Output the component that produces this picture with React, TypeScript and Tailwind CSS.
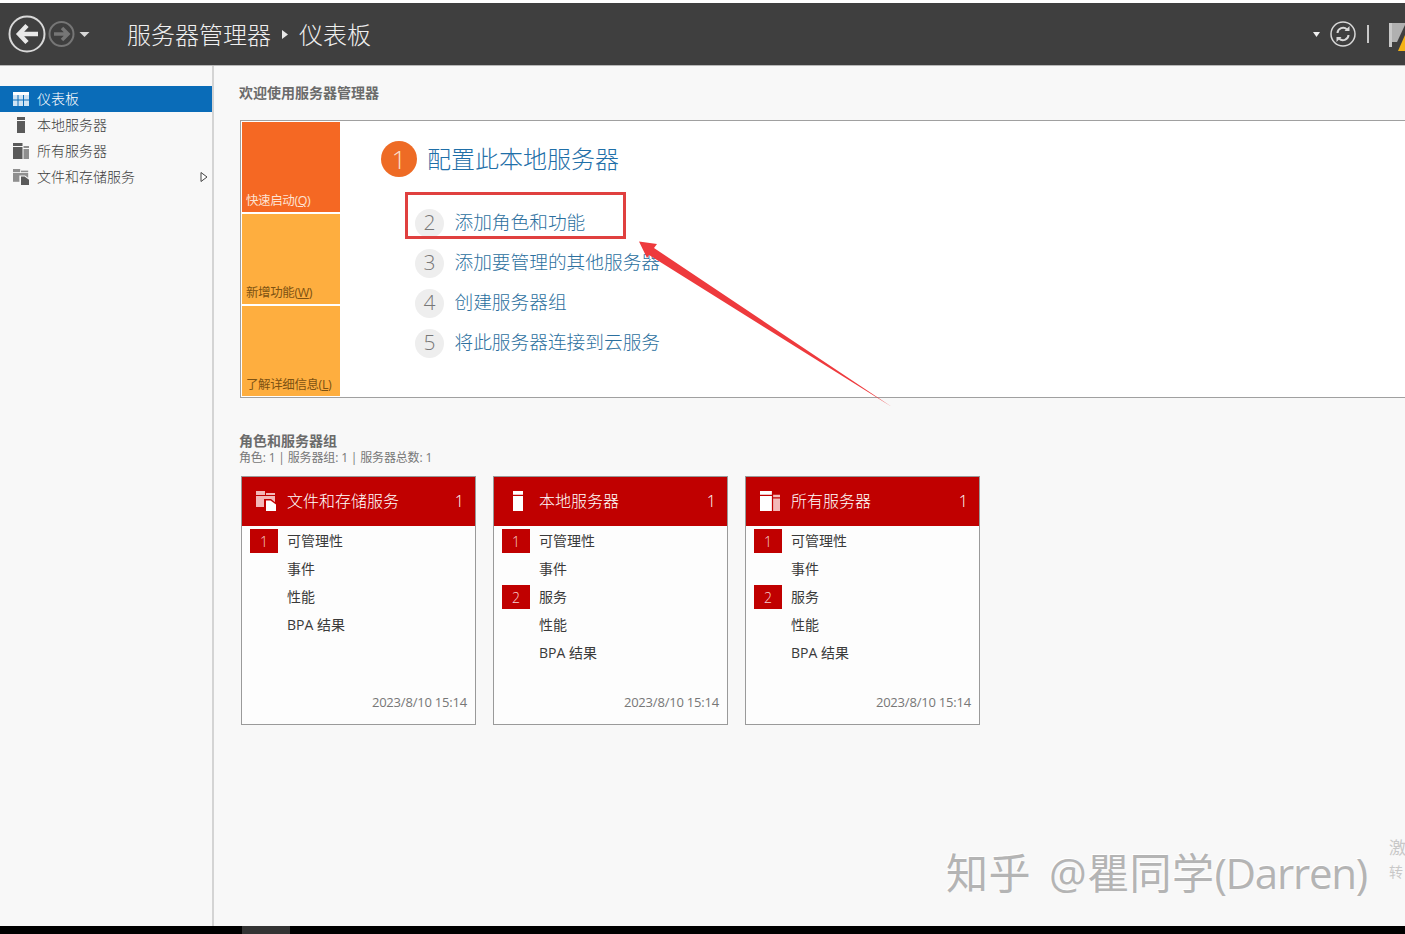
import React from "react";

const FONT = "font-['Open_Sans','Noto_Sans_CJK_SC',sans-serif]";

function GridIcon() {
  return (
    <svg width="16" height="14" viewBox="0 0 16 14">
      <rect x="0" y="0" width="16" height="14" fill="#cfe3f3" />
      <rect x="0" y="0" width="16" height="3" fill="#ffffff" />
      <path d="M0 8h16M5 3v11M10.500 3v11" stroke="#0a6cb8" strokeWidth="1" />
    </svg>
  );
}

function LocalIcon({ c = "#5a5a5a", w = 8, h = 16 }: { c?: string; w?: number; h?: number }) {
  return (
    <svg width={w} height={h} viewBox="0 0 9 16" preserveAspectRatio="none">
      <rect x="0" y="0" width="9" height="3" fill={c} />
      <rect x="0" y="4" width="9" height="12" fill={c} />
    </svg>
  );
}

function AllIcon({ c = "#5a5a5a", d = "#8f8f8f", s = 16 }: { c?: string; d?: string; s?: number }) {
  return (
    <svg width={s} height={s} viewBox="0 0 16 16">
      <rect x="0" y="0" width="9.500" height="3" fill={c} />
      <rect x="0" y="4" width="9.500" height="12" fill={c} />
      <rect x="10.500" y="3" width="5.500" height="2" fill={d} />
      <rect x="10.500" y="6" width="5.500" height="10" fill={d} />
    </svg>
  );
}

function FilesIcon({ c = "#8f8f8f", d = "#5a5a5a", cut = "#f8f8f8", s = 16 }: { c?: string; d?: string; cut?: string; s?: number }) {
  return (
    <svg width={s} height={s} viewBox="0 0 20 20">
      <rect x="0" y="0" width="9" height="4" fill={c} />
      <rect x="10" y="2" width="9" height="2" fill={c} />
      <rect x="0" y="5" width="19" height="11" fill={c} />
      <path d="M8 8h7l5 4v8H8z" fill={cut} />
      <path d="M10 9.500h4.500L20 13.500V20H10z" fill={d} />
    </svg>
  );
}

function Arrow() {
  return (
    <svg width="270" height="180" viewBox="0 0 270 180" className="absolute left-[630px] top-[232px]">
      <path d="M9 9.500 L27 12 L24 16 L262 175 L19 23 L17 26 Z" fill="#ee3a3d" />
    </svg>
  );
}

function NavItem({ icon, label, active, chevron }: { icon: React.ReactNode; label: string; active?: boolean; chevron?: boolean }) {
  return (
    <div className={active ? "flex h-[26px] items-center bg-[#0a6cb8] pb-[1px] text-white" : "flex h-[26px] items-center pb-[1px] text-[#3c3c3c]"}>
      <div className="flex w-[37px] shrink-0 items-center justify-center pl-[5px]">{icon}</div>
      <span className="text-[14px] font-light leading-none">{label}</span>
      {chevron && (
        <svg width="8" height="10" viewBox="0 0 8 10" className="ml-auto mr-[4px]">
          <path d="M1 .5 7 5 1 9.500z" fill="#fff" stroke="#444" />
        </svg>
      )}
    </div>
  );
}

function Tile({ label, accel, orange }: { label: string; accel: string; orange?: boolean }) {
  return (
    <div className={`flex h-[90px] w-[98px] items-end px-[4px] pb-[3px] text-[12.500px] leading-[16px] tracking-[-0.4px] ${orange ? "bg-[#f56823] text-[#fde3d3]" : "bg-[#feae3f] text-[#7d5212]"}`}>
      <span>
        {label}(<span className="underline">{accel}</span>)
      </span>
    </div>
  );
}

function Step({ n, label }: { n: string; label: string }) {
  return (
    <div className="flex h-[40px] items-center">
      <div className="mb-[2px] flex h-[29px] w-[29px] items-center justify-center rounded-full bg-[#eeeeee] text-[21px] font-light text-[#777777]">{n}</div>
      <span className="mb-[4px] ml-[10.500px] text-[18.700px] font-light text-[#2b6f9e]">{label}</span>
    </div>
  );
}

function Row({ label, badge }: { label: string; badge?: string }) {
  return (
    <div className="flex h-[28px] items-center">
      <div className="flex w-[45px] shrink-0 pl-[8px]">
        {badge && <div className="flex h-[24px] w-[28px] items-center justify-center bg-[#c00000] text-[14px] font-light text-[#f8d0d0]">{badge}</div>}
      </div>
      <span className="text-[14px] leading-none text-[#3a3a3a]">{label}</span>
    </div>
  );
}

function Card({ icon, title, rows }: { icon: React.ReactNode; title: string; rows: [string, string?][] }) {
  return (
    <div className="flex h-[249px] w-[235px] flex-col border border-[#9a9a9a] bg-[#fdfdfd]">
      <div className="flex h-[49px] shrink-0 items-center bg-[#c00000] pb-[1px] text-white">
        <div className="flex w-[45px] shrink-0 items-center justify-center pl-[2px]">{icon}</div>
        <span className="text-[16px] font-light leading-none">{title}</span>
        <span className="ml-auto mr-[11px] text-[16px] font-light">1</span>
      </div>
      <div className="flex flex-1 flex-col pt-[1px]">
        {rows.map(([l, b]) => (
          <Row key={l} label={l} badge={b} />
        ))}
      </div>
      <div className="pb-[13px] pr-[8px] text-right text-[13px] leading-[18px] tracking-[-0.2px] text-[#777777]">2023/8/10 15:14</div>
    </div>
  );
}

export default function App() {
  return (
    <div className={`${FONT} relative flex h-[934px] w-[1405px] flex-col overflow-hidden bg-[#f8f8f8]`}>
      <div className="h-[3px] shrink-0 bg-white" />
      <header className="flex h-[63px] shrink-0 items-center border-b border-[#b8b8b8] bg-[#3f3f3f] text-white">
        <svg width="92" height="40" viewBox="0 0 92 40" className="ml-[7px] shrink-0">
          <circle cx="20" cy="20" r="17.500" fill="none" stroke="#d8d8d8" strokeWidth="2" />
          <path d="M31 20H13M20 11.500l-8 8.500 8 8.500" fill="none" stroke="#e8e8e8" strokeWidth="4.500" />
          <circle cx="54.500" cy="20" r="12" fill="none" stroke="#767676" strokeWidth="2" />
          <path d="M47 20h13M55 14l6 6-6 6" fill="none" stroke="#767676" strokeWidth="3.500" />
          <path d="M72.500 18h10l-5 5z" fill="#d8d8d8" />
        </svg>
        <span className="ml-[28px] pt-[1px] text-[24px] font-light leading-none text-[#f0f0f0]">服务器管理器</span>
        <svg width="6" height="9" viewBox="0 0 6 9" className="ml-[11px]">
          <path d="M0 0l6 4.500L0 9z" fill="#e8e8e8" />
        </svg>
        <span className="ml-[11px] pt-[1px] text-[24px] font-light leading-none text-[#f0f0f0]">仪表板</span>
        <div className="ml-auto flex items-center">
          <svg width="7" height="5" viewBox="0 0 7 5" className="mr-[10px]">
            <path d="M0 0h7L3.500 5z" fill="#f0f0f0" />
          </svg>
          <svg width="26" height="26" viewBox="0 0 26 26">
            <circle cx="13" cy="13" r="12" fill="none" stroke="#d8d8d8" strokeWidth="1.500" />
            <path d="M7.500 12a5.500 5.500 0 0 1 9.500-3.500M18.500 14a5.500 5.500 0 0 1-9.500 3.500" fill="none" stroke="#d8d8d8" strokeWidth="2" />
            <path d="M14.500 10h5V5zM11.500 16h-5v5z" fill="#d8d8d8" />
          </svg>
          <div className="ml-[11px] h-[18px] w-[2px] bg-[#c8c8c8]" />
          <svg width="16" height="34" viewBox="0 0 16 34" className="ml-[20px] mt-[6px]">
            <rect x="0" y="3" width="3" height="24" fill="#c8c8c8" />
            <path d="M3 3h13v2L8 22H3z" fill="#b0b0b0" />
            <path d="M9 31 16 15v16z" fill="#f5b316" />
          </svg>
        </div>
      </header>

      <div className="flex min-h-0 flex-1">
        <nav className="w-[214px] shrink-0 border-r-2 border-[#d4d4d4] pt-[20px]">
          <NavItem active icon={<GridIcon />} label="仪表板" />
          <NavItem icon={<LocalIcon />} label="本地服务器" />
          <NavItem icon={<AllIcon />} label="所有服务器" />
          <NavItem icon={<FilesIcon />} label="文件和存储服务" chevron />
        </nav>

        <main className="min-w-0 flex-1 pl-[25px] pt-[18px]">
          <h1 className="h-[18px] text-[14px] font-bold leading-[18px] text-[#6b6b6b]">欢迎使用服务器管理器</h1>
          <section className="ml-[1px] mt-[18px] flex h-[278px] w-[1180px] border border-[#a0a0a0] bg-white p-[1px]">
            <div className="flex flex-col gap-[2px]">
              <Tile orange label="快速启动" accel="Q" />
              <Tile label="新增功能" accel="W" />
              <Tile label="了解详细信息" accel="L" />
            </div>
            <div className="pl-[41px] pt-[19px]">
              <div className="flex h-[36px] items-center">
                <div className="flex h-[36px] w-[36px] items-center justify-center rounded-full bg-[#ee6b25] text-[26px] font-light text-[#fbe0d0]">1</div>
                <span className="ml-[10px] text-[24px] font-light leading-none text-[#1f6fa8]">配置此本地服务器</span>
              </div>
              <div className="ml-[34px] mt-[27px]">
                <Step n="2" label="添加角色和功能" />
                <Step n="3" label="添加要管理的其他服务器" />
                <Step n="4" label="创建服务器组" />
                <Step n="5" label="将此服务器连接到云服务" />
              </div>
            </div>
          </section>
          <h2 className="mt-[34px] h-[17px] text-[14px] font-bold leading-[17px] text-[#6b6b6b]">角色和服务器组</h2>
          <p className="h-[17px] pt-[1px] text-[12px] leading-[16px] tracking-[-0.150px] text-[#777777]">角色: 1 | 服务器组: 1 | 服务器总数: 1</p>
          <div className="ml-[2px] mt-[10px] flex gap-[17px]">
            <Card icon={<FilesIcon c="#f3b8b8" d="#ffffff" cut="#c00000" s={20} />} title="文件和存储服务" rows={[["可管理性", "1"], ["事件"], ["性能"], ["BPA 结果"]]} />
            <Card icon={<LocalIcon c="#ffffff" w={10} h={20} />} title="本地服务器" rows={[["可管理性", "1"], ["事件"], ["服务", "2"], ["性能"], ["BPA 结果"]]} />
            <Card icon={<AllIcon c="#ffffff" d="#f3b8b8" s={20} />} title="所有服务器" rows={[["可管理性", "1"], ["事件"], ["服务", "2"], ["性能"], ["BPA 结果"]]} />
          </div>
        </main>
      </div>

      <div className="relative h-[8px] shrink-0 bg-black">
        <div className="absolute left-[242px] top-0 h-full w-[48px] bg-[#333333]" />
      </div>

      <div className="absolute left-[405px] top-[192px] h-[47px] w-[221px] border-[3px] border-[#e0403f]" />
      <Arrow />
      <div className="absolute left-[946px] top-[847px] whitespace-nowrap text-[42px] leading-[52px] tracking-[0.4px] text-[#b4b4b4] [text-shadow:-1px_-1px_0_#ffffff]">
        知乎<span className="ml-[7px]"> @瞿同学</span>
        <span className="tracking-[-1.2px]">(Darren)</span>
      </div>
      <div className="absolute left-[1389px] top-[836px] text-[17px] leading-[24px] text-[#c8c8c8]">激</div>
      <div className="absolute left-[1389px] top-[862px] text-[14px] leading-[20px] text-[#c8c8c8]">转</div>
    </div>
  );
}
